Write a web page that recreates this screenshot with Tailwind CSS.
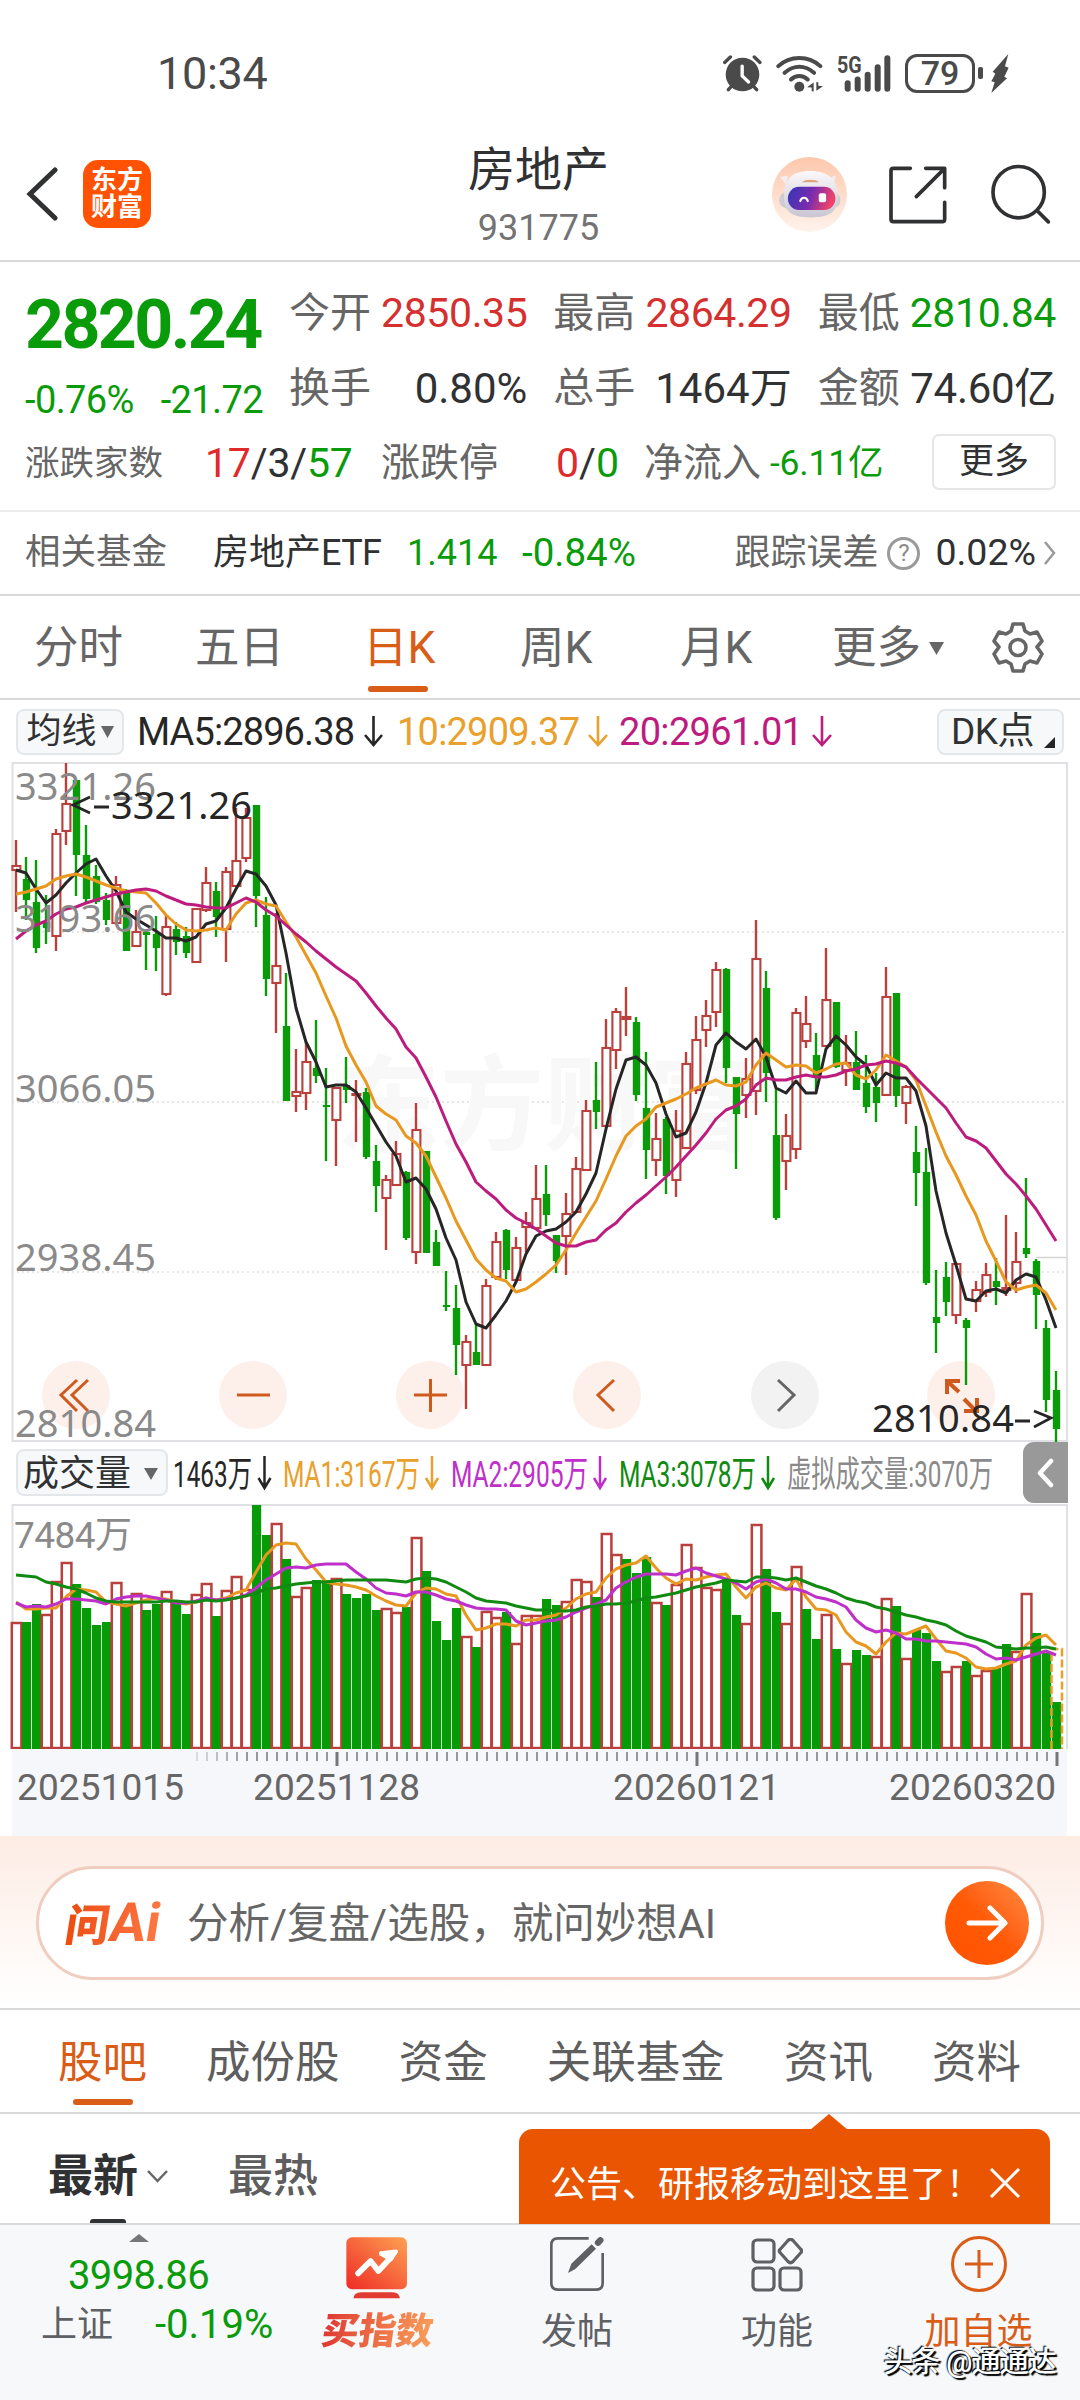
<!DOCTYPE html>
<html lang="zh-CN">
<head>
  <meta charset="UTF-8">
  <meta name="viewport" content="width=device-width, initial-scale=1.0">
  <title>房地产 931775</title>
  <script src="https://cdn.jsdelivr.net/npm/@tailwindcss/browser@4"></script>
</head>
<body class="bg-white">
  <div class="w-[1080px] h-[2400px] flex flex-col overflow-hidden bg-white text-[#303133] leading-none whitespace-nowrap font-[Roboto,'Noto_Sans_CJK_SC',sans-serif]">

    <!-- Status bar -->
    <div class="h-[146px] shrink-0 flex items-center justify-between pl-[157px] pr-[71px] text-[#4a4a4a]">
      <span class="text-[45px] tracking-[-0.3px]">10:34</span>
      <div class="flex items-center">
        <svg class="w-[39px] h-[37px]" viewBox="70 74 116 110" fill="none" stroke="currentColor" stroke-linecap="round">
          <circle cx="128" cy="132" r="50" fill="currentColor" stroke="none"/>
          <path d="M75 96L92 80M180 96L163 80M95 167L86 177M161 167L170 177" stroke-width="10"/>
          <path d="M127 107V136L146 154" stroke="#fff" stroke-width="10"/>
        </svg>
        <svg class="w-[47px] h-[37px] ml-[14px]" viewBox="229 74 141 110" fill="none" stroke="currentColor" stroke-width="12" stroke-linecap="round">
          <path d="M236 107C270 74 328 74 362 107M255 127C282 103 316 103 343 127M274 147C288 133 310 133 324 147"/>
          <circle cx="299" cy="169" r="15" fill="currentColor" stroke="none"/>
          <path d="M322 170L342 156V183L336 182V171ZM370 167L350 181V154L356 156V166Z" fill="currentColor" stroke="none"/>
        </svg>
        <svg class="w-[54px] h-[37px] ml-[14px] overflow-visible" viewBox="412 74 162 110" fill="currentColor">
          <text x="412" y="128" font-size="72" font-weight="700" textLength="74" lengthAdjust="spacingAndGlyphs">5G</text>
          <rect x="435" y="149" width="18" height="35" rx="9"/>
          <rect x="465" y="138" width="18" height="46" rx="9"/>
          <rect x="495" y="124" width="18" height="60" rx="9"/>
          <rect x="525" y="101" width="18" height="83" rx="9"/>
          <rect x="554" y="74" width="18" height="110" rx="9"/>
        </svg>
        <div class="ml-[14px] w-[70px] h-[39px] rounded-[12px] border-[3px] border-current flex items-center justify-center text-[34px] font-medium">79</div>
        <div class="ml-[3px] w-[5px] h-[12px] rounded-[2px] bg-[#4a4a4a]"></div>
        <svg class="w-[18px] h-[39px] ml-[8px]" viewBox="872 70 54 117" fill="currentColor"><path d="M924 70L877 123L885 129L873 152L883 155L873 187L920 143L912 138L925 111L914 107Z"/></svg>
      </div>
    </div>

    <!-- Title bar -->
    <div class="h-[116px] shrink-0 grid grid-cols-3 items-start pl-[26px] pr-[29px] border-b-2 border-[#d9dadb]">
      <div class="mt-[14px] flex items-center gap-[25px]">
        <svg class="w-[32px] h-[54px]" viewBox="0 0 32 54" fill="none" stroke="#303133" stroke-width="5" stroke-linecap="round"><path d="M29 3L4 27L29 51"/></svg>
        <div class="w-[68px] h-[68px] rounded-[15px] bg-[#ff5203] text-white font-bold text-[26px] leading-[27px] text-center pt-[7px]">东方<br>财富</div>
      </div>
      <div class="flex flex-col items-center">
        <span class="text-[47px] leading-[48px]">房地产</span>
        <span class="mt-[10px] text-[36px] leading-[48px] text-[#737373]">931775</span>
      </div>
      <div class="mt-[11px] flex items-center justify-end">
        <svg class="w-[75px] h-[75px]" viewBox="214 380 226 226">
          <defs>
            <linearGradient id="halo" x1="0" y1="0" x2="0" y2="1"><stop offset="0" stop-color="#fdc7ac"/><stop offset="1" stop-color="#fff3ec"/></linearGradient>
            <linearGradient id="visor" x1="0" y1="0" x2="1" y2="0.2"><stop offset="0" stop-color="#3535b8"/><stop offset="0.55" stop-color="#7a2cae"/><stop offset="1" stop-color="#f0426a"/></linearGradient>
            <linearGradient id="helmet" x1="0" y1="0" x2="0" y2="1"><stop offset="0" stop-color="#fbf9fb"/><stop offset="1" stop-color="#c9c5d2"/></linearGradient>
          </defs>
          <circle cx="327" cy="493" r="113" fill="url(#halo)"/>
          <rect x="236" y="485" width="184" height="50" rx="24" fill="#cfcbd3"/>
          <path d="M238 440L262 436L256 462ZM406 436L392 440L402 456Z" fill="#f4eef0"/>
          <path d="M250 500C250 450 270 422 328 422C388 422 412 450 412 500C412 545 390 562 330 562C272 562 250 545 250 500Z" fill="url(#helmet)"/>
          <path d="M303 456C315 446 345 446 357 456Z" fill="#e0a37c"/>
          <rect x="262" y="470" width="143" height="70" rx="34" fill="url(#visor)"/>
          <path d="M299 513C303 499 318 499 322 513" fill="none" stroke="#fff" stroke-width="6" stroke-linecap="round"/>
          <rect x="355" y="489" width="22" height="27" rx="6" fill="#fff"/>
        </svg>
        <svg class="w-[58px] h-[58px] ml-[42px]" viewBox="563 406 174 174" fill="none" stroke="#303133" stroke-width="11" stroke-linecap="round" stroke-linejoin="round">
          <path d="M627 413H576Q569 413 569 420V566Q569 573 576 573H723Q730 573 730 566V515M673 413H730V471M727 416L645 498"/>
        </svg>
        <svg class="w-[60px] h-[61px] ml-[44px]" viewBox="873 400 180 182" fill="none" stroke="#303133" stroke-width="11" stroke-linecap="round"><circle cx="956" cy="484" r="77"/><path d="M1014 542L1045 573"/></svg>
      </div>
    </div>

    <!-- Quote -->
    <div class="h-[250px] shrink-0 pt-[14px] border-b-2 border-[#ededee]">
      <div class="flex pl-[25px] pr-[24px]">
        <div class="w-[264px] text-[#0a9b0a]">
          <div class="h-[98px] flex items-center text-[68px] font-bold tracking-[-2.6px]">2820.24</div>
          <div class="h-[52px] w-[238px] flex items-center justify-between text-[38px] tracking-[-0.6px]"><span>-0.76%</span><span>-21.72</span></div>
        </div>
        <div class="flex-1 grid grid-cols-3 gap-x-[26px] auto-rows-[75px] items-center text-[41px]">
          <div class="flex items-center justify-between"><span class="text-[#666]">今开</span><span class="text-[#d5302f] tracking-[-0.4px]">2850.35</span></div>
          <div class="flex items-center justify-between"><span class="text-[#666]">最高</span><span class="text-[#d5302f] tracking-[-0.4px]">2864.29</span></div>
          <div class="flex items-center justify-between"><span class="text-[#666]">最低</span><span class="text-[#0a9b0a] tracking-[-0.4px]">2810.84</span></div>
          <div class="flex items-center justify-between"><span class="text-[#666]">换手</span><span class="text-[42px]">0.80%</span></div>
          <div class="flex items-center justify-between"><span class="text-[#666]">总手</span><span class="text-[42px]">1464万</span></div>
          <div class="flex items-center justify-between"><span class="text-[#666]">金额</span><span class="text-[42px] tracking-[-0.3px]">74.60亿</span></div>
        </div>
      </div>
      <div class="h-[75px] flex items-center pl-[25px] pr-[24px]">
        <span class="w-[180px] text-[34.5px] text-[#666]">涨跌家数</span>
        <span class="w-[176px] text-[41px] tracking-[-0.2px]"><span class="text-[#e02a2a]">17</span>/3/<span class="text-[#0a9b0a]">57</span></span>
        <span class="w-[175px] text-[39px] text-[#666]">涨跌停</span>
        <span class="w-[88px] text-[41px]"><span class="text-[#e02a2a]">0</span>/<span class="text-[#0a9b0a]">0</span></span>
        <span class="w-[126px] text-[39px] text-[#666]">净流入</span>
        <span class="text-[35.5px] tracking-[-0.2px] text-[#0a9b0a]">-6.11亿</span>
        <div class="ml-auto -mt-[4px] w-[124px] h-[56px] rounded-[7px] border-2 border-[#e6e6e6] flex items-center justify-center text-[35px]">更多</div>
      </div>
    </div>

    <!-- Related fund -->
    <div class="h-[84px] shrink-0 flex items-center pl-[25px] pr-[24px] border-b-2 border-[#d9dadb] text-[36px]">
      <span class="w-[188px] text-[35.5px] text-[#666]">相关基金</span>
      <span class="w-[194px]">房地产<span class="tracking-[-0.6px]">ETF</span></span>
      <span class="w-[115px] text-[#0a9b0a]">1.414</span>
      <span class="text-[38.5px] text-[#0a9b0a]">-0.84%</span>
      <span class="ml-auto text-[#666]">跟踪误差</span>
      <div class="ml-[9px] w-[33px] h-[33px] rounded-full border-[3px] border-[#9a9a9a] flex items-center justify-center text-[24px] text-[#8a8a8a]">?</div>
      <span class="ml-[15px] text-[37.5px]">0.02%</span>
      <svg class="w-[13px] h-[24px] ml-[7px]" viewBox="0 0 13 24" fill="none" stroke="#999" stroke-width="2.5"><path d="M2 1L11 12L2 23"/></svg>
    </div>

    <!-- Period tabs -->
    <div class="h-[104px] shrink-0 flex items-center pl-[34px] pr-[36px] pt-[2px] border-b-2 border-[#d9dadb] text-[44.5px] text-[#666]">
      <span class="w-[161px]">分时</span>
      <span class="w-[168px]">五日</span>
      <div class="relative w-[157px] text-[#d95c17]">日K<i class="absolute left-[5px] top-[60px] w-[60px] h-[6px] rounded-full bg-[#d95c17]"></i></div>
      <span class="w-[160px]">周K</span>
      <span class="w-[152px]">月K</span>
      <span>更多</span>
      <svg class="w-[15px] h-[13px] ml-[8px]" viewBox="0 0 15 13" fill="#666"><path d="M0 0H15L7.5 13Z"/></svg>
      <svg class="w-[52px] h-[52px] ml-auto -mt-[2px]" viewBox="0 0 52 52" fill="none" stroke="#666" stroke-width="3.6" stroke-linejoin="round">
        <path d="M21 3H31L33 10L38 13L45 11L50 20L45 26L50 33L45 42L38 40L33 43L31 50H21L19 43L14 40L7 42L2 33L7 26L2 20L7 11L14 13L19 10Z"/><circle cx="26" cy="26.500" r="8"/>
      </svg>
    </div>

    <!-- Moving averages -->
    <div class="h-[63px] shrink-0 flex items-center pl-[16px] pr-[16px] text-[37px]">
      <div class="w-[108px] h-[46px] rounded-[8px] border-2 border-[#e4e7ea] bg-[#f6f8fa] flex items-center justify-center gap-[4px] text-[35px]">均线<svg class="w-[13px] h-[12px]" viewBox="0 0 13 12" fill="#666"><path d="M0 0H13L6.5 12Z"/></svg></div>
      <svg class="w-[700px] h-[46px] ml-[13px]" viewBox="137 708 700 46" fill="none" stroke-width="2.600">
        <g font-size="38" stroke="none">
          <text x="137" y="744" fill="#262626" textLength="218">MA5:2896.38</text>
          <text x="397" y="744" fill="#e9a02c" textLength="183">10:2909.37</text>
          <text x="619" y="744" fill="#bd1c7e" textLength="184">20:2961.01</text>
        </g>
        <path d="M373.500 715V743M365 734L373.500 744L382 734" stroke="#262626"/>
        <path d="M598 715V743M589 734L598 744L607 734" stroke="#e9a02c"/>
        <path d="M822 715V743M813 734L822 744L831 734" stroke="#bd1c7e"/>
      </svg>
      <div class="ml-auto w-[127px] h-[46px] rounded-[8px] border-2 border-[#e4e7ea] bg-[#f6f8fa] flex items-center pl-[12px] text-[37px] tracking-[-0.5px]">DK点<svg class="w-[11px] h-[11px] ml-[10px] mt-[22px]" viewBox="0 0 11 11" fill="#262626"><path d="M11 0V11H0Z"/></svg></div>
    </div>

    <!-- K line chart -->
    <svg class="w-[1080px] h-[678px] shrink-0 block overflow-visible" viewBox="0 763 1080 678">
      <g stroke="#dedede" stroke-width="1.500" stroke-dasharray="2 3"><path d="M12 932H1067M12 1102H1067M12 1272H1067"/></g>
      <path d="M1036 1257.500H1067" stroke="#d4d4d4" stroke-width="1.500"/>
      <text x="336" y="1143" font-size="104" font-weight="700" fill="#f8f8f8" textLength="416">东方财富</text>
      <g fill="#fdf0ea">
        <circle cx="76" cy="1395" r="34"/><circle cx="253" cy="1395" r="34"/><circle cx="430" cy="1395" r="34"/><circle cx="607" cy="1395" r="34"/>
        <circle cx="785" cy="1395" r="34" fill="#f2f2f2"/><circle cx="961" cy="1395" r="34"/>
      </g>
      <rect x="12.500" y="763" width="1054.500" height="678" fill="none" stroke="#dfe0e3" stroke-width="2"/>
      <g id="candles"></g>
      <g id="averages" fill="none" stroke-width="3" stroke-linejoin="round"></g>
      <g fill="none" stroke="#cf5a1d" stroke-width="3">
        <path d="M77 1380L61 1395L77 1411M88 1380L72 1395L88 1411"/>
        <path d="M237 1395H270M414 1395H447M430.500 1379V1412"/>
        <path d="M614 1380L598 1395L614 1411"/>
        <path d="M778 1380L794 1395L778 1411" stroke="#666"/>
        <path d="M947 1394V1381H960M948 1382L959 1392M964 1399L976 1411M964 1411H977V1398" stroke-width="4"/>
      </g>
      <g font-size="38" fill="#8a8a8a" font-family="'Noto Sans'">
        <text x="15" y="800" textLength="141">3321.26</text>
        <text x="15" y="932" textLength="141">3193.66</text>
        <text x="15" y="1102" textLength="141">3066.05</text>
        <text x="15" y="1271" textLength="141">2938.45</text>
        <text x="15" y="1437" textLength="141">2810.84</text>
        <text x="111" y="819" textLength="141" fill="#262626">3321.26</text>
        <text x="872" y="1432" textLength="142" fill="#262626">2810.84</text>
      </g>
      <path d="M90 797L73 805L90 813M94 807H109M1015 1421H1030M1034 1411L1051 1418L1034 1427" fill="none" stroke="#262626" stroke-width="2.800"/>
    </svg>

    <!-- Volume header -->
    <div class="h-[63px] shrink-0 flex items-center pl-[16px] pr-[12px]">
      <div class="w-[152px] h-[47px] rounded-[8px] border-2 border-[#e4e7ea] bg-[#f6f8fa] flex items-center justify-between pl-[5px] pr-[8px] pt-[2px] text-[36px]">成交量<svg class="w-[14px] h-[12px]" viewBox="0 0 14 12" fill="#666"><path d="M0 0H14L7 12Z"/></svg></div>
      <svg class="w-[825px] h-[46px] ml-[5px] overflow-visible" viewBox="173 1450 825 46" fill="none" stroke-width="2.500">
        <g font-size="36" stroke="none">
          <text x="173" y="1487" fill="#262626" textLength="79" lengthAdjust="spacingAndGlyphs">1463万</text>
          <text x="283" y="1487" fill="#e9a02c" textLength="137" lengthAdjust="spacingAndGlyphs">MA1:3167万</text>
          <text x="451" y="1487" fill="#bf2fc9" textLength="137" lengthAdjust="spacingAndGlyphs">MA2:2905万</text>
          <text x="619" y="1487" fill="#118a11" textLength="137" lengthAdjust="spacingAndGlyphs">MA3:3078万</text>
          <text x="787" y="1487" fill="#8a8a8a" textLength="206" lengthAdjust="spacingAndGlyphs">虚拟成交量:3070万</text>
        </g>
        <path d="M264.500 1456V1487M258.500 1478L264.500 1488L270.500 1478" stroke="#262626"/>
        <path d="M432 1456V1487M426 1478L432 1488L438 1478" stroke="#e9a02c"/>
        <path d="M600 1456V1487M594 1478L600 1488L606 1478" stroke="#bf2fc9"/>
        <path d="M768 1456V1487M762 1478L768 1488L774 1478" stroke="#118a11"/>
      </svg>
      <div class="ml-auto w-[45px] h-[61px] rounded-l-[11px] bg-[#999] flex items-center justify-center">
        <svg class="w-[17px] h-[30px]" viewBox="0 0 17 30" fill="none" stroke="#fff" stroke-width="4.500" stroke-linecap="round" stroke-linejoin="round"><path d="M14 3L3 15L14 27"/></svg>
      </div>
    </div>

    <!-- Volume chart -->
    <svg class="w-[1080px] h-[245px] shrink-0 block" viewBox="0 1504 1080 245">
      <path d="M12.500 1749V1505H1067V1749" fill="none" stroke="#dfe0e3" stroke-width="2"/>
      <text x="14" y="1548" font-size="37" fill="#8a8a8a" textLength="118">7484万</text>
      <g id="volumes"></g>
      <g id="volumeAverages" fill="none" stroke-width="3" stroke-linejoin="round"></g>
    </svg>
    <div class="h-[87px] shrink-0 px-[12px]">
      <svg class="w-[1055px] h-[87px] block bg-[#f6f7fb]" viewBox="12 1749 1055 87">
        <g id="ticks"></g>
        <g font-size="37" fill="#666">
          <text x="17" y="1800" textLength="167">20251015</text>
          <text x="253" y="1800" textLength="167">20251128</text>
          <text x="613" y="1800" textLength="167">20260121</text>
          <text x="889" y="1800" textLength="167">20260320</text>
        </g>
      </svg>
    </div>

    <!-- AI prompt -->
    <div class="h-[174px] shrink-0 pt-[30px] px-[36px] bg-gradient-to-b from-[#fdece4] to-white border-b-2 border-[#d9dadb]">
      <div class="h-[114px] rounded-full border-[3px] border-[#efcdbf] bg-white flex items-center pl-[27px] pr-[12px]">
        <span class="w-[101px] flex items-baseline skew-x-[-9deg] font-black text-[44px] bg-gradient-to-r from-[#ec4c0c] to-[#ff7a45] bg-clip-text text-transparent">问<span class="text-[54px] font-bold">Ai</span></span>
        <span class="ml-[20px] mt-[2px] text-[41.5px] text-[#666]">分析/复盘/选股，就问妙想AI</span>
        <div class="ml-auto w-[84px] h-[84px] rounded-full bg-gradient-to-bl from-[#ff8a3d] via-[#ff5a05] to-[#ff5200] flex items-center justify-center">
          <svg class="w-[42px] h-[36px]" viewBox="0 0 42 36" fill="none" stroke="#fff" stroke-width="5" stroke-linecap="round" stroke-linejoin="round"><path d="M3 18H38M24 3L39 18L24 33"/></svg>
        </div>
      </div>
    </div>

    <!-- Content tabs -->
    <div class="h-[104px] shrink-0 flex items-center justify-between pl-[58px] pr-[59px] pt-[4px] border-b-2 border-[#d9dadb] text-[44.5px] text-[#5e5e5e]">
      <div class="relative text-[#d95c17]">股吧<i class="absolute left-[15px] top-[58px] w-[60px] h-[6px] rounded-full bg-[#d95c17]"></i></div>
      <span>成份股</span>
      <span>资金</span>
      <span>关联基金</span>
      <span>资讯</span>
      <span>资料</span>
    </div>

    <!-- Post filter -->
    <div class="relative h-[111px] shrink-0 flex items-center pl-[48px] pt-[15px] pb-0 border-b-2 border-[#d9dadb]">
      <div class="flex items-center gap-[9px] text-[45px] font-bold">最新<svg class="w-[21px] h-[13px]" viewBox="0 0 21 13" fill="none" stroke="#666" stroke-width="2.500"><path d="M1 1L10.500 11L20 1"/></svg></div>
      <span class="ml-[60px] text-[45px] font-medium text-[#5e5e5e]">最热</span>
      <i class="absolute left-[90px] bottom-0 w-[36px] h-[4px] rounded-t-[3px] bg-[#303133]"></i>
      <div class="absolute left-[519px] top-[15px] w-[531px] h-[95px] rounded-t-[14px] bg-[#ea5502] text-white flex items-center pl-[31px] pt-[16px] text-[36px]">
        <svg class="absolute left-[291px] -top-[15px] w-[38px] h-[16px]" viewBox="0 0 38 16" fill="#ea5502"><path d="M19 0L38 16H0Z"/></svg>
        公告、研报移动到这里了！
        <svg class="absolute left-[470px] top-[39px] w-[32px] h-[30px]" viewBox="0 0 32 30" fill="none" stroke="#fff" stroke-width="3"><path d="M2 1L30 29M30 1L2 29"/></svg>
      </div>
    </div>

    <!-- Bottom bar -->
    <div class="relative flex-1 bg-[#f6f8fa] grid grid-cols-[277px_200px_200px_200px_203px] text-[#5f6063]">
      <div class="flex flex-col items-center pt-[9px]">
        <svg class="w-[20px] h-[8px]" viewBox="0 0 20 8" fill="#777"><path d="M10 0L20 8H0Z"/></svg>
        <span class="mt-[14px] text-[40px] tracking-[-0.6px] text-[#0a9b0a]">3998.86</span>
        <div class="mt-[9px] pl-[41px] w-[277px] flex items-center text-[36px]">上证<span class="ml-[42px] text-[40px] text-[#0a9b0a]">-0.19%</span></div>
      </div>
      <div class="flex flex-col items-center pt-[12px]">
        <svg class="w-[62px] h-[62px]" viewBox="110 70 184 184">
          <defs>
            <linearGradient id="buy" x1="0" y1="1" x2="1" y2="0"><stop offset="0" stop-color="#ee2a26"/><stop offset="1" stop-color="#ffa152"/></linearGradient>
          </defs>
          <rect x="111" y="71" width="180" height="154" rx="17" fill="url(#buy)"/>
          <path d="M132 252Q134 234 155 234H248Q268 234 270 252Z" fill="#e23b31"/>
          <path d="M146 178L183 141L206 171L240 134" fill="none" stroke="#fff" stroke-width="17" stroke-linejoin="round" stroke-linecap="round"/>
          <path d="M212 112L258 107Q266 107 264 115L248 140Q242 146 237 140L209 124Q206 114 212 112Z" fill="#fff"/>
        </svg>
        <span class="mt-[12px] px-[4px] py-[2px] skew-x-[-8deg] text-[37px] font-black bg-gradient-to-r from-[#dd2f30] to-[#f9a05c] bg-clip-text text-transparent">买指数</span>
      </div>
      <div class="flex flex-col items-center pt-[12px]">
        <svg class="w-[54px] h-[54px]" viewBox="720 66 162 162" fill="none" stroke="#5f6063" stroke-width="8">
          <path d="M836 70H744Q724 70 724 90V204Q724 224 744 224H858Q878 224 878 204V114"/>
          <path d="M774 174L784 146L845 88L858 101L796 162Z" fill="#5f6063" stroke="none"/><path d="M864 83L871 76" stroke-width="19" stroke-linecap="round"/>
        </svg>
        <span class="mt-[23px] text-[36px]">发帖</span>
      </div>
      <div class="flex flex-col items-center pt-[13px]">
        <svg class="w-[52px] h-[54px]" viewBox="0 0 52 54" fill="none" stroke="#5f6063" stroke-width="3.200" stroke-linejoin="round">
          <rect x="2" y="2" width="21" height="22" rx="4"/><rect x="2" y="30" width="21" height="22" rx="4"/><rect x="29" y="30" width="21" height="22" rx="4"/>
          <path d="M37 2.500Q39.500 0 42 2.500L50 11.500Q51.500 13 50 14.500L42 23.500Q39.500 26 37 23.500L29 14.500Q27.500 13 29 11.500Z"/>
        </svg>
        <span class="mt-[22px] text-[36px]">功能</span>
      </div>
      <div class="flex flex-col items-center pt-[11px] text-[#d95c17]">
        <svg class="w-[56px] h-[56px]" viewBox="0 0 56 56" fill="none" stroke="#d95c17" stroke-width="3"><circle cx="28" cy="28" r="26.500"/><path d="M14 28H42M28 14V42"/></svg>
        <span class="mt-[22px] text-[36px]">加自选</span>
      </div>
      <span class="absolute right-[24px] top-[123px] text-[29px] font-medium tracking-[-0.8px] text-white [text-shadow:-1px_-1px_1px_#000,2px_2px_1px_#000]">头条 @通通达</span>
    </div>
  </div>

  <script>
    const x = i => 16 + i * 10;

    // color, high, body top, body bottom, low
    const candles = `r840,866,870,912 g857,879,900,920 g860,902,948,953 g895,922,928,944 r829,834,936,951 r763,804,831,845 g780,780,855,896 g825,855,899,902 g865,876,902,904 g893,900,920,925
      r876,885,923,925 g889,891,951,951 r910,932,946,947 g929,932,935,970 g916,934,948,971 r915,927,994,996 g922,929,942,955 g927,936,953,958 r908,909,962,963 r867,883,910,912
      g882,891,917,937 r867,872,929,962 r808,861,886,887 r808,818,858,862 g805,805,896,927 g897,915,979,996 r913,966,983,1033 g973,1026,1101,1101 r1049,1092,1096,1112 r1042,1062,1093,1110
      g1020,1068,1076,1083 g1068,1105,1106,1161 r1087,1088,1120,1166 g1057,1085,1090,1103 r1080,1094,1095,1142 g1088,1092,1157,1159 g1145,1161,1186,1212 r1175,1180,1198,1250 r1141,1154,1185,1186 g1171,1172,1238,1240
      r1103,1130,1252,1264 g1151,1151,1253,1253 g1230,1242,1266,1266 g1271,1305,1306,1311 g1285,1308,1345,1375 r1335,1342,1365,1409 g1324,1352,1365,1365 r1279,1286,1365,1365 r1232,1242,1277,1280 g1229,1230,1270,1279
      r1237,1248,1280,1282 r1212,1223,1227,1252 r1165,1199,1228,1229 g1165,1194,1215,1226 g1235,1235,1261,1273 r1193,1214,1236,1275 r1157,1169,1212,1213 r1100,1111,1170,1171 g1062,1100,1112,1129 r1019,1048,1126,1126
      r1008,1012,1050,1069 r987,1017,1019,1036 g1017,1022,1095,1101 g1052,1108,1150,1179 r1113,1139,1160,1176 g1117,1119,1176,1194 r1110,1131,1180,1197 r1052,1064,1148,1149 r1016,1040,1090,1094 r1000,1016,1030,1047
      r962,970,1012,1027 g968,969,1068,1083 g1077,1077,1114,1169 r1058,1079,1095,1118 r920,959,1091,1115 g971,988,1073,1102 g1089,1135,1218,1220 r1114,1136,1161,1190 r1008,1013,1149,1159 r996,1024,1041,1048
      g1033,1055,1076,1091 r948,1000,1046,1047 g1002,1002,1067,1068 r1035,1063,1070,1086 g1031,1062,1090,1090 g1055,1083,1107,1113 g1073,1087,1103,1122 r967,997,1095,1095 g993,993,1096,1107 r1085,1087,1103,1124
      g1126,1152,1173,1206 g1148,1172,1283,1285 g1270,1317,1323,1353 g1262,1277,1302,1316 r1262,1264,1315,1324 g1318,1320,1328,1385 r1281,1290,1301,1312 r1263,1275,1292,1297 g1258,1281,1287,1305 r1215,1288,1290,1296
      r1232,1262,1283,1293 g1178,1248,1254,1258 g1259,1261,1295,1329 g1320,1328,1400,1412 g1371,1390,1429,1442`.split(/\s+/);

    const ma5 = [870,873,889,903,895,883,873,864,859,876,891,912,919,925,931,938,938,941,937,924,921,908,889,871,874,886,905,953,1008,1042,1062,1087,1085,1085,1092,1108,1125,1142,1156,1182,1178,1189,1209,1238,1260,1302,1324,1328,1315,1301,1282,1254,1236,1231,1229,1222,1212,1194,1173,1129,1089,1060,1057,1065,1083,1114,1137,1133,1112,1083,1045,1033,1042,1049,1039,1057,1088,1093,1081,1093,1093,1049,1036,1045,1057,1065,1085,1073,1078,1078,1091,1126,1191,1233,1265,1299,1301,1291,1289,1293,1280,1274,1277,1300,1328];
    const ma10 = [894,892,889,886,879,876,874,877,881,885,888,891,892,893,903,915,924,930,931,930,928,930,914,903,900,904,906,922,937,955,973,996,1018,1046,1065,1082,1106,1114,1120,1136,1143,1156,1177,1198,1221,1240,1259,1270,1278,1281,1292,1289,1282,1274,1265,1250,1233,1217,1201,1179,1156,1136,1126,1119,1107,1103,1099,1094,1088,1084,1080,1085,1086,1082,1065,1053,1060,1067,1065,1066,1073,1069,1064,1063,1075,1079,1070,1055,1061,1067,1080,1106,1132,1156,1175,1196,1215,1241,1261,1282,1290,1287,1285,1293,1310];
    const ma20 = [939,931,925,921,914,909,907,903,900,897,894,892,890,889,891,896,900,904,905,907,908,908,903,898,902,910,916,925,934,942,951,959,967,974,981,993,1006,1018,1029,1047,1058,1077,1097,1121,1144,1162,1182,1191,1199,1210,1218,1223,1229,1236,1243,1246,1246,1242,1240,1230,1223,1212,1203,1195,1186,1177,1167,1156,1145,1133,1119,1110,1106,1099,1085,1078,1080,1080,1077,1075,1077,1077,1075,1071,1069,1065,1064,1061,1063,1067,1078,1088,1098,1108,1123,1137,1141,1148,1161,1174,1184,1196,1209,1225,1241];

    const volumes = 'r1622 g1622 g1604 r1614 r1581 r1562 g1584 g1608 g1625 g1622 r1582 g1604 r1593 g1610 g1604 r1591 g1602 g1614 r1594 r1583 g1616 r1590 r1576 r1589 g1505 g1535 r1523 g1559 r1596 r1587 g1580 g1580 r1578 g1594 g1598 g1594 g1610 r1608 r1612 g1607 r1537 g1571 g1621 g1640 g1608 r1636 g1647 r1611 r1617 g1612 r1643 r1615 r1615 g1599 g1605 r1601 r1579 r1581 g1597 r1533 r1554 g1559 g1573 g1557 r1602 g1605 r1584 r1544 r1567 r1587 r1589 g1579 g1615 r1623 r1524 g1569 g1612 r1623 r1566 g1609 g1639 r1614 g1649 r1663 g1650 g1655 r1656 r1598 g1606 r1658 g1630 g1633 g1661 r1671 r1666 g1661 r1675 r1670 g1667 g1644 r1651 r1593 g1633 g1653 g1702'.split(' ');
    const vma1 = [1602,1609,1609,1608,1608,1597,1589,1590,1592,1602,1604,1606,1603,1600,1598,1599,1602,1604,1602,1598,1600,1598,1593,1590,1572,1555,1545,1543,1544,1559,1570,1582,1584,1585,1587,1590,1596,1601,1605,1606,1593,1588,1589,1594,1596,1615,1630,1628,1624,1624,1626,1620,1620,1617,1615,1608,1599,1594,1592,1578,1569,1565,1563,1556,1568,1578,1584,1579,1580,1577,1575,1574,1587,1598,1587,1583,1588,1590,1579,1597,1609,1610,1615,1632,1642,1646,1654,1642,1633,1634,1630,1626,1639,1651,1653,1658,1667,1669,1668,1664,1661,1645,1638,1635,1645];
    const vma2 = [1603,1607,1606,1607,1604,1599,1599,1600,1601,1604,1599,1597,1596,1596,1598,1600,1603,1603,1601,1598,1600,1599,1598,1595,1588,1580,1574,1568,1567,1568,1565,1564,1564,1564,1572,1579,1588,1593,1594,1596,1592,1592,1595,1599,1601,1605,1608,1609,1609,1610,1621,1625,1623,1621,1620,1617,1612,1608,1604,1600,1588,1582,1577,1574,1574,1574,1575,1571,1568,1573,1576,1579,1583,1589,1582,1579,1583,1589,1589,1592,1597,1599,1602,1607,1620,1628,1632,1630,1633,1639,1639,1641,1641,1642,1643,1644,1647,1654,1659,1658,1660,1657,1654,1651,1655];
    const vma3 = [1575,1576,1577,1582,1584,1587,1589,1593,1598,1601,1602,1602,1602,1602,1602,1601,1601,1602,1602,1600,1601,1600,1598,1596,1593,1589,1588,1586,1584,1583,1582,1582,1581,1580,1580,1580,1580,1580,1581,1582,1579,1578,1579,1582,1587,1592,1598,1601,1602,1603,1606,1608,1610,1610,1611,1611,1610,1607,1606,1604,1604,1603,1601,1598,1597,1595,1593,1590,1587,1585,1583,1580,1581,1582,1577,1577,1578,1580,1578,1582,1586,1589,1593,1598,1601,1603,1607,1609,1612,1615,1617,1620,1622,1625,1631,1636,1639,1642,1647,1648,1649,1648,1648,1647,1649];

    function line(values, color) {
      return `<polyline stroke="${color}" points="${values.map((v, i) => x(i) + ',' + v).join(' ')}"/>`;
    }

    document.getElementById('candles').innerHTML = candles.map((c, i) => {
      const [high, top, bottom, low] = c.slice(1).split(',').map(Number);
      if (c[0] === 'g') {
        return `<path d="M${x(i)} ${high}V${low}" stroke="#0a9a0a" stroke-width="2.4"/>
          <rect x="${x(i) - 3.2}" y="${top}" width="7.4" height="${Math.max(bottom - top, 2)}" fill="#0a9a0a"/>`;
      }
      return `<path d="M${x(i)} ${high}V${top}M${x(i)} ${bottom}V${low}" stroke="#b9403d" stroke-width="2.4"/>
        <rect x="${x(i) - 3.6}" y="${top}" width="8" height="${bottom - top}" fill="#fff" stroke="#b9403d" stroke-width="2.1"/>`;
    }).join('');
    document.getElementById('averages').innerHTML = line(ma5, '#262626') + line(ma10, '#e9981f') + line(ma20, '#bd1c7e');

    document.getElementById('volumes').innerHTML = volumes.map((v, i) => {
      const top = +v.slice(1);
      return v[0] === 'g'
        ? `<rect x="${x(i) - 4}" y="${top}" width="9.2" height="${1749 - top}" fill="#079a07"/>`
        : `<rect x="${x(i) - 4.2}" y="${top + 1}" width="9.6" height="${1747 - top}" fill="#fff" stroke="#b9403d" stroke-width="2.5"/>`;
    }).join('') + '<path d="M1051.500 1749V1649H1062V1749" fill="none" stroke="#e9a02c" stroke-width="2.5" stroke-dasharray="8 3"/>';
    document.getElementById('volumeAverages').innerHTML = line(vma1, '#e9981f') + line(vma2, '#bf2fc9') + line(vma3, '#118a11');

    let ticks = '';
    for (let i = 18; i < 105; i++) {
      const major = (i - 32) % 36 === 0;
      ticks += `<path d="M${x(i) + 1} 1752V${major ? 1766 : 1761}" stroke="#777" stroke-width="${major ? 3 : 1.5}" opacity="${Math.min(1, (i - 16) / 7)}"/>`;
    }
    document.getElementById('ticks').innerHTML = ticks;
  </script>
</body>
</html>
